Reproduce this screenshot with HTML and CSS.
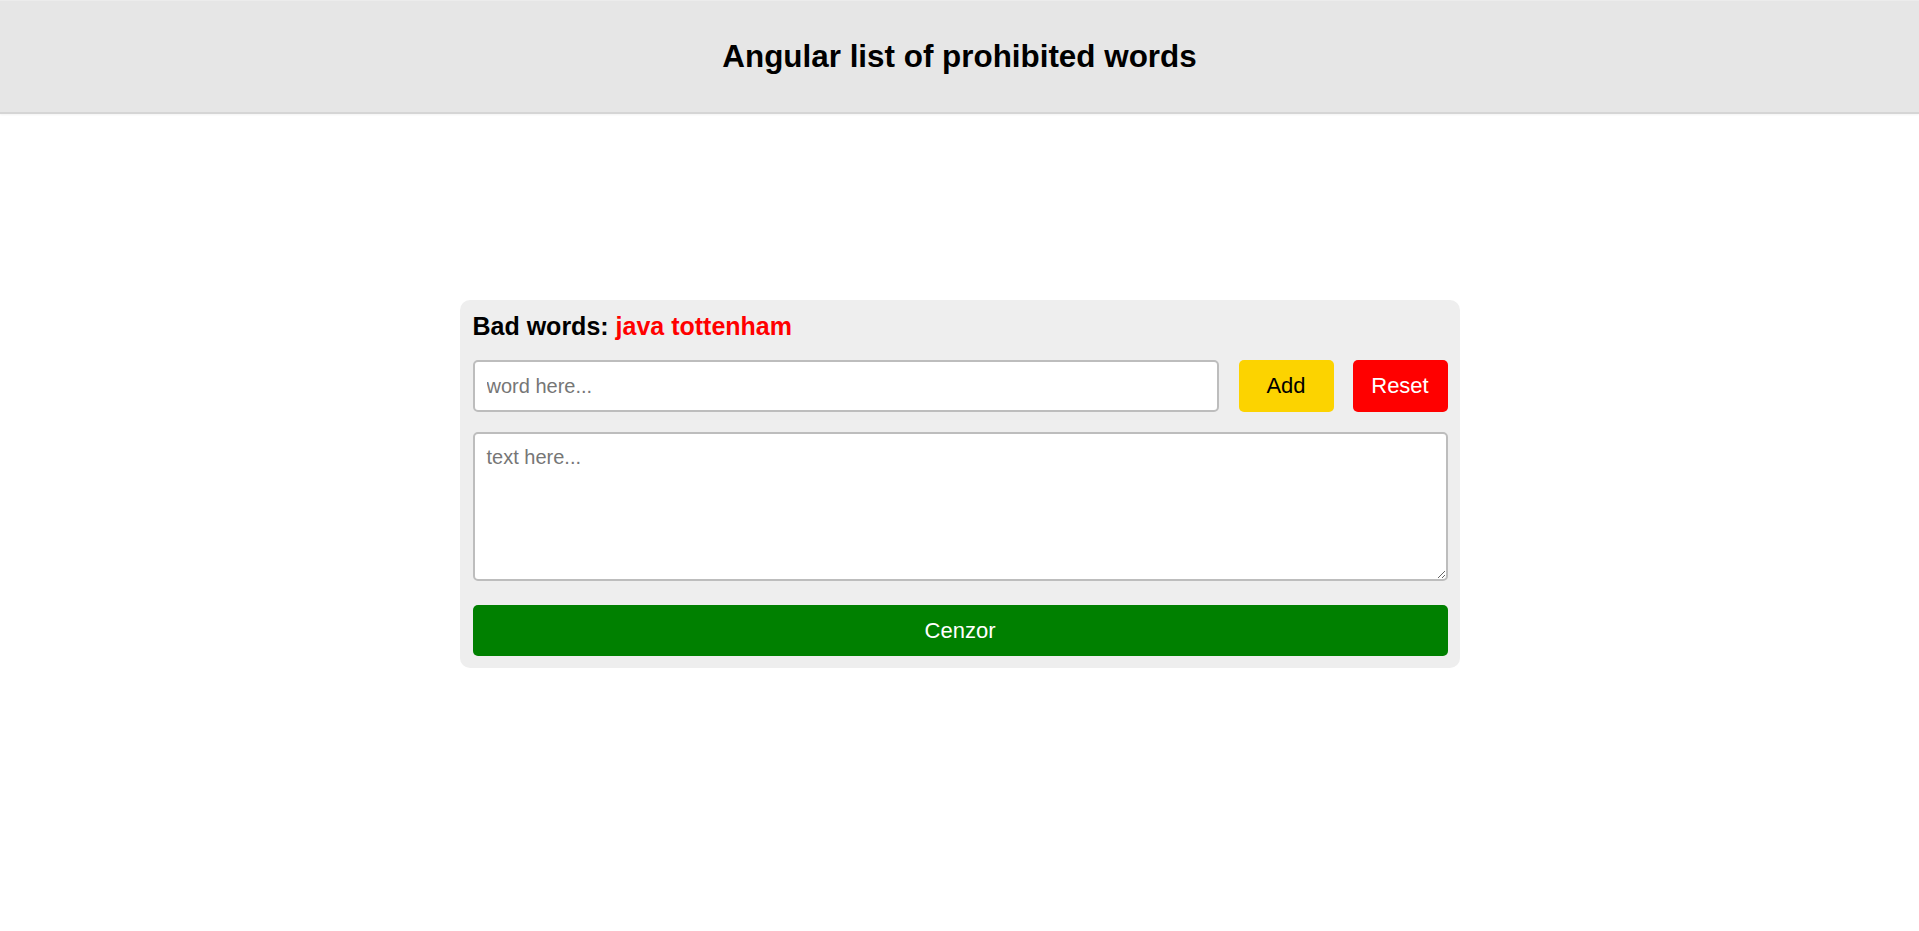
FILE: index.html
```html
<!DOCTYPE html>
<html lang="en">
<head>
<meta charset="utf-8">
<title>Angular list of prohibited words</title>
<link rel="stylesheet" href="styles.css">
</head>
<body>
<header class="top-bar">
  <h1 class="title">Angular list of prohibited words</h1>
</header>
<main class="page">
  <section class="card">
    <h2 class="bad-words">Bad words: <span class="bad-list">java tottenham</span></h2>
    <div class="word-row">
      <input class="word-input" type="text" placeholder="word here...">
      <button class="btn btn-add">Add</button>
      <button class="btn btn-reset">Reset</button>
    </div>
    <textarea class="text-input" placeholder="text here..."></textarea>
    <button class="btn btn-cenzor">Cenzor</button>
  </section>
</main>
</body>
</html>
```

FILE: styles.css
```css
html, body {
  margin: 0;
  padding: 0;
  background: #ffffff;
}

body {
  font-family: "Liberation Sans", Arial, sans-serif;
  color: #000;
}

.top-bar {
  height: 111px;
  background: #e6e6e6;
  border-top: 1px solid #ececec;
  border-bottom: 2px solid #d5d5d5;
  box-shadow: 0 1px 2px rgba(0, 0, 0, 0.05);
  display: flex;
  align-items: center;
  justify-content: center;
}

.title {
  margin: 0;
  font-size: 31.4px;
  font-weight: bold;
  line-height: 36px;
  padding-top: 1px;
}

.page {
  padding-top: 186px;
}

.card {
  width: 1000px;
  box-sizing: border-box;
  margin: 0 auto;
  padding: 12px 12px 12px 13px;
  background: #eeeeee;
  border-radius: 10px;
}

.bad-words {
  margin: 0;
  font-size: 25px;
  font-weight: bold;
  line-height: 28px;
}

.bad-list {
  color: #ff0000;
}

.word-row {
  display: flex;
  gap: 19px;
  margin-top: 20px;
}

.word-input {
  flex: 1;
  min-width: 0;
  height: 52px;
  box-sizing: border-box;
  border: 2px solid #bdbdbd;
  border-radius: 5px;
  padding: 0 12px;
  font-family: "Liberation Sans", Arial, sans-serif;
  font-size: 20px;
  background: #fff;
  margin-right: 1px;
}

.word-input::placeholder,
.text-input::placeholder {
  color: #767676;
}

.btn {
  border: none;
  border-radius: 5px;
  font-family: "Liberation Sans", Arial, sans-serif;
  font-size: 22px;
  cursor: pointer;
}

.btn-add {
  width: 95px;
  height: 52px;
  background: #fcd300;
  color: #000;
}

.btn-reset {
  width: 95px;
  height: 52px;
  background: #ff0000;
  color: #fff;
}

.text-input {
  display: block;
  width: 100%;
  height: 149px;
  box-sizing: border-box;
  margin-top: 20px;
  border: 2px solid #bdbdbd;
  border-radius: 5px;
  padding: 12px 12px;
  font-family: "Liberation Sans", Arial, sans-serif;
  font-size: 20px;
  background: #fff;
  resize: both;
}

.btn-cenzor {
  display: block;
  width: 100%;
  height: 51px;
  margin-top: 24px;
  background: #008000;
  color: #fff;
}
```
